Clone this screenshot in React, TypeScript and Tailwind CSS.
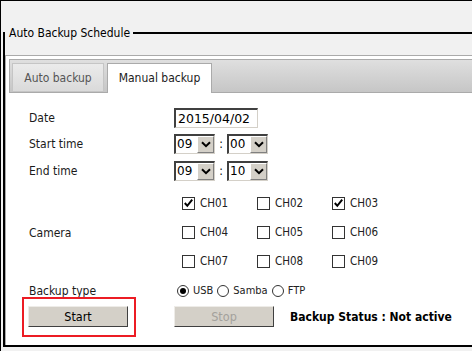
import React from "react";

const Check = ({ checked }: { checked: boolean }) => (
  <span className="w-[13px] h-[13px] border border-[#333] bg-white flex items-center justify-center shrink-0">
    {checked && (
      <svg width="11" height="11" viewBox="0 0 11 11">
        <path d="M1.8 5 L4.3 7.8 L9.2 1.6" fill="none" stroke="#000" strokeWidth="2" />
      </svg>
    )}
  </span>
);

const Radio = ({ on }: { on: boolean }) => (
  <span className="w-[12px] h-[12px] rounded-full border border-[#333] bg-white flex items-center justify-center shrink-0">
    {on && <span className="w-[6px] h-[6px] rounded-full bg-black" />}
  </span>
);

const Sel = ({ v }: { v: string }) => (
  <div className="flex h-[20px] w-[41px] border-t-2 border-l-2 border-t-[#404040] border-l-[#404040] border-r border-b border-r-[#d4d0c8] border-b-[#d4d0c8] bg-white">
    <span className="flex-1 pl-[1px] text-[12px] leading-[17px] font-['DejaVu_Sans',sans-serif] text-black">{v}</span>
    <span className="w-[17px] h-[17px] bg-[#d4d0c8] border border-t-white border-l-white border-r-[#808080] border-b-[#808080] flex items-center justify-center">
      <svg width="10" height="7" viewBox="0 0 10 7">
        <path d="M1 1.2 L5 5.2 L9 1.2" fill="none" stroke="#000" strokeWidth="2" />
      </svg>
    </span>
  </div>
);

const channels = [
  ["CH01", true],
  ["CH02", false],
  ["CH03", true],
  ["CH04", false],
  ["CH05", false],
  ["CH06", false],
  ["CH07", false],
  ["CH08", false],
  ["CH09", false],
] as const;

export default function App() {
  return (
    <div className="w-[472px] h-[351px] overflow-hidden bg-[#f1f1f1] border-t border-l border-black font-['DejaVu_Sans_Condensed','DejaVu_Sans',sans-serif] text-[12px] text-[#1a1a1a]">
      <fieldset className="ml-[2px] mt-[25px] w-[520px] border-2 border-r-0 border-black">
        <legend className="pl-[4px] pr-[3px] leading-[14px] text-[12px] text-black">Auto Backup Schedule</legend>
        <div className="mt-[15px] h-[290px] border-t border-l border-[#aaa] bg-white p-[3px] pb-0 pr-0 flex flex-col">
          <div className="h-[34px] border border-[#aaa] bg-gradient-to-b from-[#dfdfdf] to-[#c6c6c6] flex items-end pl-[2px] gap-[3px]">
            <div className="h-[29px] w-[92px] border border-[#c5c5c5] bg-gradient-to-b from-[#ebebeb] to-[#dadada] flex items-center justify-center text-[#555]">
              Auto backup
            </div>
            <div className="h-[30px] w-[105px] -mb-px border border-b-0 border-[#aaa] bg-white flex items-center justify-center pb-[1px] text-[#212121]">
              Manual backup
            </div>
          </div>
          <div className="flex-1 pl-[20px] pt-[15px]">
            <div className="flex items-center h-[20px]">
              <span className="w-[145px]">Date</span>
              <div className="h-[20px] w-[84px] border-t-2 border-l-2 border-t-[#404040] border-l-[#404040] border-r border-b border-r-[#d4d0c8] border-b-[#d4d0c8] bg-white pl-[2px] text-[12.5px] leading-[17px] font-['DejaVu_Sans',sans-serif] text-black">
                2015/04/02
              </div>
            </div>
            <div className="flex items-center h-[20px] mt-[6px]">
              <span className="w-[145px]">Start time</span>
              <Sel v="09" />
              <span className="w-[12px] text-center text-black">:</span>
              <Sel v="00" />
            </div>
            <div className="flex items-center h-[20px] mt-[7px]">
              <span className="w-[145px]">End time</span>
              <Sel v="09" />
              <span className="w-[12px] text-center text-black">:</span>
              <Sel v="10" />
            </div>
            <div className="flex items-center mt-[8px]">
              <span className="w-[145px]">Camera</span>
              <div className="grid grid-cols-[75px_75px_75px] grid-rows-[29px_29px_29px] pl-[8px]">
                {channels.map(([n, c]) => (
                  <div key={n} className="flex items-center gap-[5px]">
                    <Check checked={c} />
                    <span className="text-[11.5px] text-[#222]">{n}</span>
                  </div>
                ))}
              </div>
            </div>
            <div className="flex items-center h-[16px] mt-[7px]">
              <span className="w-[145px]">Backup type</span>
              <div className="flex items-center pl-[3px] text-[11px] text-[#222]">
                <Radio on />
                <span className="ml-[4px] mr-[4px]">USB</span>
                <Radio on={false} />
                <span className="ml-[4px] mr-[4px]">Samba</span>
                <Radio on={false} />
                <span className="ml-[4px]">FTP</span>
              </div>
            </div>
            <div className="flex items-center h-[21px] mt-[7px] -ml-px">
              <div className="relative w-[146px] h-[21px]">
                <button className="w-[100px] h-[21px] bg-[#d4d0c8] border border-t-[#eeece8] border-l-[#eeece8] border-r-[#404040] border-b-[#404040] text-[12.5px] text-black leading-[18px]">
                  Start
                </button>
                <div className="absolute left-[-6px] top-[-9px] w-[114px] h-[40px] border-2 border-[#ec1c24]" />
              </div>
              <button className="w-[100px] h-[21px] bg-[#d4d0c8] border border-t-[#eeece8] border-l-[#eeece8] border-r-[#404040] border-b-[#404040] text-[12.5px] text-[#a3a19c] leading-[18px]">
                Stop
              </button>
              <span className="ml-[16px] font-bold text-black text-[12px]">Backup Status : Not active</span>
            </div>
          </div>
        </div>
      </fieldset>
    </div>
  );
}
